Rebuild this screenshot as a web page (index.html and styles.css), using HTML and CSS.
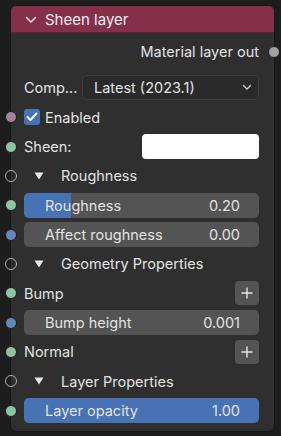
FILE: index.html
```html
<!DOCTYPE html>
<html>
<head>
<meta charset="utf-8">
<link rel="stylesheet" href="styles.css">
</head>
<body>
<div class="node">
  <div class="node-header">
    <svg class="hdr-chev" width="12" height="8" viewBox="0 0 12 8"><path d="M1.5 1.5 L6 6 L10.5 1.5" fill="none" stroke="#e6e6e6" stroke-width="1.5" stroke-linecap="round" stroke-linejoin="round"/></svg>
    <span class="title">Sheen layer</span>
  </div>
  <div class="node-body">
    <div class="row out">
      <span class="label">Material layer out</span>
      <span class="socket socket-right grey"></span>
    </div>
    <div class="row comp">
      <span class="label comp-label">Comp...</span>
      <div class="dropdown">
        <span>Latest (2023.1)</span>
        <svg width="10" height="7" viewBox="0 0 10 7"><path d="M1.5 1.5 L5 5 L8.5 1.5" fill="none" stroke="#d0d0d0" stroke-width="1.4" stroke-linecap="round" stroke-linejoin="round"/></svg>
      </div>
    </div>
    <div class="row">
      <span class="socket mauve"></span>
      <span class="checkbox"><svg width="12" height="10" viewBox="0 0 12 10"><path d="M1.5 5 L4.5 8 L10.5 1.5" fill="none" stroke="#fff" stroke-width="2" stroke-linecap="round" stroke-linejoin="round"/></svg></span>
      <span class="label">Enabled</span>
    </div>
    <div class="row">
      <span class="socket green"></span>
      <span class="label grow">Sheen:</span>
      <span class="swatch"></span>
    </div>
    <div class="row panel">
      <span class="socket hollow"></span>
      <svg class="tri" width="10" height="8" viewBox="0 0 10 8"><path d="M0.5 0.5 H9.5 L5 7.5 Z" fill="#e6e6e6"/></svg>
      <span class="label">Roughness</span>
    </div>
    <div class="row">
      <span class="socket green"></span>
      <div class="slider"><div class="fill" style="width:20%"></div><span class="s-label">Roughness</span><span class="s-val">0.20</span></div>
    </div>
    <div class="row">
      <span class="socket blue"></span>
      <div class="slider"><span class="s-label">Affect roughness</span><span class="s-val">0.00</span></div>
    </div>
    <div class="row panel">
      <span class="socket hollow"></span>
      <svg class="tri" width="10" height="8" viewBox="0 0 10 8"><path d="M0.5 0.5 H9.5 L5 7.5 Z" fill="#e6e6e6"/></svg>
      <span class="label">Geometry Properties</span>
    </div>
    <div class="row">
      <span class="socket green"></span>
      <span class="label grow">Bump</span>
      <span class="plus"><svg width="12" height="12" viewBox="0 0 12 12"><path d="M6 0.5 V11.5 M0.5 6 H11.5" stroke="#e6e6e6" stroke-width="1.4"/></svg></span>
    </div>
    <div class="row">
      <span class="socket blue"></span>
      <div class="slider"><span class="s-label">Bump height</span><span class="s-val">0.001</span></div>
    </div>
    <div class="row">
      <span class="socket green"></span>
      <span class="label grow">Normal</span>
      <span class="plus"><svg width="12" height="12" viewBox="0 0 12 12"><path d="M6 0.5 V11.5 M0.5 6 H11.5" stroke="#e6e6e6" stroke-width="1.4"/></svg></span>
    </div>
    <div class="row panel">
      <span class="socket hollow"></span>
      <svg class="tri" width="10" height="8" viewBox="0 0 10 8"><path d="M0.5 0.5 H9.5 L5 7.5 Z" fill="#e6e6e6"/></svg>
      <span class="label">Layer Properties</span>
    </div>
    <div class="row">
      <span class="socket green"></span>
      <div class="slider full"><div class="fill" style="width:100%"></div><span class="s-label">Layer opacity</span><span class="s-val">1.00</span></div>
    </div>
  </div>
</div>
</body>
</html>
```

FILE: styles.css
```css
html, body {
  margin: 0;
  padding: 0;
  background: #1d1d1d;
  width: 281px;
  height: 436px;
  overflow: hidden;
  font-family: Inter, "DejaVu Sans", sans-serif;
  font-size: 14.5px;
  color: #e2e2e2;
}
body {
  padding: 6px 0 0 11px;
  box-sizing: border-box;
}
.node {
  width: 263px;
  height: 425px;
  background: #2f2f2f;
  border-radius: 5px;
  box-shadow: 0 0 0 1px #171717;
  position: relative;
}
.node-header {
  height: 27px;
  background: #84304b;
  border-radius: 5px 5px 0 0;
  border-bottom: 1px solid #5c2233;
  box-sizing: border-box;
  display: flex;
  align-items: center;
  padding-left: 14px;
}
.hdr-chev {
  margin-right: 8px;
  margin-top: 1px;
}
.title {
  color: #ececec;
  font-size: 15px;
}
.node-body {
  padding: 4.33px 15px 0 13px;
}
.row {
  height: 29.33px;
  display: flex;
  align-items: center;
  position: relative;
}
.row.out {
  justify-content: flex-end;
  margin-bottom: 6.67px;
}
.label {
  white-space: nowrap;
}
.grow {
  flex: 1;
}
.socket {
  position: absolute;
  left: -19px;
  top: 50%;
  width: 12px;
  height: 12px;
  margin-top: -6px;
  border-radius: 50%;
  box-sizing: border-box;
  border: 1px solid #1e1e1e;
}
.socket-right {
  left: auto;
  right: -21px;
}
.grey { background: #a1a1a1; }
.mauve { background: #a5809a; }
.green { background: #8cc4a4; }
.blue { background: #6389b8; }
.hollow {
  background: transparent;
  border: 1.5px solid #b0b0b0;
}
.comp-label {
  width: 58px;
}
.dropdown {
  flex: 1;
  height: 25px;
  box-sizing: border-box;
  background: #2a2a2a;
  border: 1px solid #3c3c3c;
  border-radius: 5px;
  display: flex;
  align-items: center;
  justify-content: space-between;
  padding: 0 6px 0 11px;
}
.checkbox {
  width: 16px;
  height: 16px;
  background: #4772b3;
  border-radius: 3px;
  display: flex;
  align-items: center;
  justify-content: center;
  margin-right: 5px;
}
.swatch {
  width: 117px;
  height: 25px;
  background: #ffffff;
  border-radius: 4px;
}
.tri {
  margin-left: 10px;
  margin-right: 17px;
}
.slider {
  flex: 1;
  height: 25px;
  background: #545454;
  border-radius: 5px;
  position: relative;
  overflow: hidden;
  display: flex;
  align-items: center;
  justify-content: space-between;
  padding: 0 19px 0 21px;
}
.fill {
  position: absolute;
  left: 0;
  top: 0;
  bottom: 0;
  background: #4772b3;
}
.s-label, .s-val {
  position: relative;
}
.plus {
  width: 24px;
  height: 24px;
  background: #545454;
  border-radius: 4px;
  display: flex;
  align-items: center;
  justify-content: center;
}
```
